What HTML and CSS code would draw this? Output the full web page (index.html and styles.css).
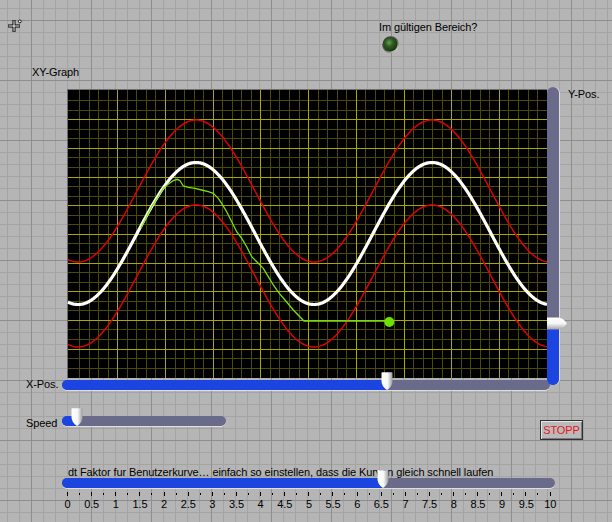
FILE: index.html
```html
<!DOCTYPE html>
<html lang="de">
<head>
<meta charset="utf-8">
<title>XY-Graph</title>
<link rel="stylesheet" href="styles.css">
</head>
<body>
<div class="panel">
  <svg class="cursor" width="16" height="16" viewBox="0 0 16 16">
    <path d="M1 7H13M7 1V13" stroke="#000" stroke-width="3" fill="none"/>
    <path d="M1.5 7H12.5M7 1.5V12.5" stroke="#fff" stroke-width="1" fill="none"/>
    <circle cx="12.8" cy="2.4" r="1.4" fill="#fff" stroke="#000" stroke-width="0.9"/>
  </svg>

  <div class="indicator">
    <div class="label">Im gültigen Bereich?</div>
    <svg class="led" width="18" height="18" viewBox="0 0 18 18">
      <defs>
        <linearGradient id="ledRim" x1="0" y1="0" x2="1" y2="1">
          <stop offset="0" stop-color="#2e2e2e"/>
          <stop offset="0.55" stop-color="#5c5c5c"/>
          <stop offset="1" stop-color="#ffffff"/>
        </linearGradient>
        <radialGradient id="ledFace" cx="0.42" cy="0.38" r="0.62">
          <stop offset="0" stop-color="#6a9a58"/>
          <stop offset="0.45" stop-color="#2f5c20"/>
          <stop offset="1" stop-color="#123808"/>
        </radialGradient>
      </defs>
      <circle cx="8.8" cy="8.8" r="8.5" fill="url(#ledRim)"/>
      <circle cx="8.3" cy="8.3" r="7.1" fill="url(#ledFace)"/>
    </svg>
  </div>

  <div class="graph">
    <div class="label graph-label">XY-Graph</div>
    <div class="plot-row">
      <svg class="plot" width="480" height="289" viewBox="67 89 480 289">
        <rect x="67" y="89" width="480" height="289" fill="#6e6e6e"/>
        <rect x="68" y="90" width="479" height="288" fill="#000"/>
        <g id="grid-minor" class="grid-minor"></g>
        <g id="grid-major" class="grid-major"></g>
        <path id="red-top" class="curve-red" d=""/>
        <path id="red-bottom" class="curve-red" d=""/>
        <path id="white" class="curve-white" d=""/>
        <polyline class="curve-green" points="140.7,228.3 145,220 151.7,206.7 158.3,196.7 163.3,188.3 168.3,184 173.3,180.7 177.3,179.3 180,180.7 183.3,186 188.3,187.3 195,188.3 201.7,190 208.3,191.7 213.3,193.3 218.3,198.3 221.7,203.3 226.7,211.7 231.7,221.7 236.7,231.7 241.7,238.3 246.7,246.7 251.7,256.7 258.3,263.3 263.3,268.3 268.3,276.7 273.3,285 279.3,293.3 285,300 293.3,310 304,321 386,321"/>
        <circle class="dot-green" cx="389.3" cy="322" r="5"/>
      </svg>
      <div class="vslider">
        <div class="vfill" style="height:59px"></div>
        <svg class="vthumb" width="21" height="14" viewBox="0 0 21 14">
          <defs>
            <linearGradient id="vtg" x1="0" y1="0" x2="0" y2="1">
              <stop offset="0" stop-color="#ffffff"/>
              <stop offset="0.5" stop-color="#f6f6f6"/>
              <stop offset="1" stop-color="#a4a4a4"/>
            </linearGradient>
          </defs>
          <path d="M0 0.5H11Q16 0.5 20 6.5Q16 12.5 11 12.5H0Z" fill="url(#vtg)"/>
        </svg>
      </div>
      <div class="label ylabel">Y-Pos.</div>
    </div>
    <div class="xrow">
      <div class="label side-label">X-Pos.</div>
      <div class="hslider xslider">
        <div class="fill" style="width:325px"></div>
        <svg class="hthumb" style="left:319px" width="12" height="18" viewBox="0 0 12 18">
          <defs>
            <linearGradient id="htg1" x1="0" y1="0" x2="1" y2="0">
              <stop offset="0" stop-color="#ffffff"/>
              <stop offset="0.55" stop-color="#f8f8f8"/>
              <stop offset="1" stop-color="#9c9c9c"/>
            </linearGradient>
          </defs>
          <path d="M0.5 1Q0.5 0.3 1.5 0.3H10.5Q11.5 0.3 11.5 1V9Q11.5 14 6.5 17.7H5.5Q0.5 14 0.5 9Z" fill="url(#htg1)"/>
        </svg>
      </div>
    </div>
  </div>

  <div class="speed-row">
    <div class="label side-label speed-label">Speed</div>
    <div class="hslider speed-slider">
      <div class="fill" style="width:15px"></div>
      <svg class="hthumb" style="left:9px" width="12" height="18" viewBox="0 0 12 18">
        <defs>
          <linearGradient id="htg2" x1="0" y1="0" x2="1" y2="0">
            <stop offset="0" stop-color="#ffffff"/>
            <stop offset="0.55" stop-color="#f8f8f8"/>
            <stop offset="1" stop-color="#9c9c9c"/>
          </linearGradient>
        </defs>
        <path d="M0.5 1Q0.5 0.3 1.5 0.3H10.5Q11.5 0.3 11.5 1V9Q11.5 14 6.5 17.7H5.5Q0.5 14 0.5 9Z" fill="url(#htg2)"/>
      </svg>
    </div>
    <div class="stop-button">STOPP</div>
  </div>

  <div class="dt-block">
    <div class="label dt-label">dt Faktor fur Benutzerkurve… einfach so einstellen, dass die Kurven gleich schnell laufen</div>
    <div class="hslider dt-slider">
      <div class="fill" style="width:321px"></div>
      <svg class="hthumb" style="left:315px" width="12" height="18" viewBox="0 0 12 18">
        <defs>
          <linearGradient id="htg3" x1="0" y1="0" x2="1" y2="0">
            <stop offset="0" stop-color="#ffffff"/>
            <stop offset="0.55" stop-color="#f8f8f8"/>
            <stop offset="1" stop-color="#9c9c9c"/>
          </linearGradient>
        </defs>
        <path d="M0.5 1Q0.5 0.3 1.5 0.3H10.5Q11.5 0.3 11.5 1V9Q11.5 14 6.5 17.7H5.5Q0.5 14 0.5 9Z" fill="url(#htg3)"/>
      </svg>
    </div>
    <div class="ticks">
      <span class="tick major"></span><span class="tick"></span><span class="tick major"></span><span class="tick"></span>
      <span class="tick major"></span><span class="tick"></span><span class="tick major"></span><span class="tick"></span>
      <span class="tick major"></span><span class="tick"></span><span class="tick major"></span><span class="tick"></span>
      <span class="tick major"></span><span class="tick"></span><span class="tick major"></span><span class="tick"></span>
      <span class="tick major"></span><span class="tick"></span><span class="tick major"></span><span class="tick"></span>
      <span class="tick major"></span><span class="tick"></span><span class="tick major"></span><span class="tick"></span>
      <span class="tick major"></span><span class="tick"></span><span class="tick major"></span><span class="tick"></span>
      <span class="tick major"></span><span class="tick"></span><span class="tick major"></span><span class="tick"></span>
      <span class="tick major"></span><span class="tick"></span><span class="tick major"></span><span class="tick"></span>
      <span class="tick major"></span><span class="tick"></span><span class="tick major"></span><span class="tick"></span>
      <span class="tick major"></span>
    </div>
    <div class="tick-labels">
      <span class="tl"><span>0</span></span><span class="tl"><span>0.5</span></span><span class="tl"><span>1</span></span>
      <span class="tl"><span>1.5</span></span><span class="tl"><span>2</span></span><span class="tl"><span>2.5</span></span>
      <span class="tl"><span>3</span></span><span class="tl"><span>3.5</span></span><span class="tl"><span>4</span></span>
      <span class="tl"><span>4.5</span></span><span class="tl"><span>5</span></span><span class="tl"><span>5.5</span></span>
      <span class="tl"><span>6</span></span><span class="tl"><span>6.5</span></span><span class="tl"><span>7</span></span>
      <span class="tl"><span>7.5</span></span><span class="tl"><span>8</span></span><span class="tl"><span>8.5</span></span>
      <span class="tl"><span>9</span></span><span class="tl"><span>9.5</span></span><span class="tl"><span>10</span></span>
    </div>
  </div>
</div>
<script src="script.js"></script>
</body>
</html>
```

FILE: styles.css
```css
* {
  box-sizing: border-box;
}

html,
body {
  margin: 0;
  padding: 0;
}

body {
  background: #b5b5b5;
}

.panel {
  position: relative;
  width: 612px;
  height: 522px;
  overflow: hidden;
  font-family: "Liberation Sans", Arial, sans-serif;
  font-size: 11px;
  line-height: 13px;
  letter-spacing: -0.1px;
  color: #000;
  background-color: #b5b5b5;
  background-image:
    linear-gradient(to right, #8e8e8e 1px, transparent 1px),
    linear-gradient(to bottom, #8e8e8e 1px, transparent 1px),
    linear-gradient(to right, #a4a4a4 1px, transparent 1px),
    linear-gradient(to bottom, #a4a4a4 1px, transparent 1px);
  background-size: 60px 60px, 60px 60px, 12px 12px, 12px 12px;
  background-position: 31px 0, 0 20px, 7px 0, 0 8px;
}

.label {
  height: 13px;
  white-space: nowrap;
}

.cursor {
  position: absolute;
  left: 7px;
  top: 19px;
}

/* Indicator */
.indicator {
  padding-top: 21px;
  padding-left: 379px;
}

.led {
  display: block;
  margin-top: 2px;
  margin-left: 3px;
}

/* Graph */
.graph-label {
  margin-top: 12px;
  padding-left: 32px;
}

.plot-row {
  display: flex;
  align-items: flex-start;
  height: 299px;
  padding-left: 67px;
}

.plot {
  display: block;
  flex: none;
  margin-top: 10px;
}

.grid-minor {
  stroke: #4a4a00;
  stroke-width: 1;
  shape-rendering: crispEdges;
}

.grid-major {
  stroke: #a8a800;
  stroke-width: 1;
  shape-rendering: crispEdges;
}

.curve-red {
  fill: none;
  stroke: #e00000;
  stroke-width: 1.5;
}

.curve-white {
  fill: none;
  stroke: #ffffff;
  stroke-width: 3.2;
}

.curve-green {
  fill: none;
  stroke: #78e016;
  stroke-width: 1.3;
}

.dot-green {
  fill: #6ee000;
}

.vslider {
  position: relative;
  z-index: 1;
  flex: none;
  display: flex;
  flex-direction: column;
  justify-content: flex-end;
  width: 12px;
  height: 298px;
  margin-top: 8px;
  background: #6a6a8a;
  border-radius: 6px;
  box-shadow: 1px 0 0 #dedede;
}

.vfill {
  background: #1c44e0;
  border-radius: 0 0 6px 6px;
}

.vthumb {
  position: absolute;
  left: 0;
  top: 230px;
}

.ylabel {
  margin-left: 9px;
  margin-top: 9px;
}

/* Horizontal sliders */
.xrow {
  display: flex;
  align-items: flex-start;
  height: 12px;
  padding-left: 26px;
}

.side-label {
  flex: none;
  width: 36px;
}

.hslider {
  position: relative;
  flex: none;
  height: 10px;
  background: #6a6a8a;
  border-radius: 5px;
  box-shadow: 0 1px 0 #dedede;
}

.fill {
  height: 100%;
  background: #1c44e0;
  border-radius: 5px 0 0 5px;
}

.hthumb {
  position: absolute;
  top: -8px;
}

.xslider {
  width: 488px;
  margin-top: 2px;
}

.speed-row {
  display: flex;
  align-items: flex-start;
  height: 50px;
  padding-left: 26px;
}

.speed-label {
  margin-top: 27px;
}

.speed-slider {
  width: 164px;
  margin-top: 26px;
}

.stop-button {
  flex: none;
  width: 43px;
  height: 20px;
  margin-top: 30px;
  margin-left: 314px;
  border: 1px solid #303030;
  background: #bababa;
  box-shadow: inset 1px 1px 0 #e6e6e6, inset -1px -1px 0 #7a7a7a;
  color: #e8141c;
  line-height: 18px;
  text-align: center;
}

/* dt slider */
.dt-label {
  margin-top: 26px;
  padding-left: 68px;
}

.dt-slider {
  width: 493px;
  margin-top: -1px;
  margin-left: 62px;
}

.ticks {
  display: flex;
  justify-content: space-between;
  align-items: flex-start;
  width: 484px;
  height: 4px;
  margin-top: 4px;
  margin-left: 67px;
}

.tick {
  width: 1px;
  height: 2px;
  margin-top: 1px;
  background: #000;
}

.tick.major {
  height: 4px;
  margin-top: 0;
}

.tick-labels {
  display: flex;
  justify-content: space-between;
  width: 484px;
  margin-top: 2px;
  margin-left: 67px;
}

.tl {
  display: flex;
  justify-content: center;
  width: 1px;
  white-space: nowrap;
}
```

FILE: script.js
```js
(function () {
  var NS = 'http://www.w3.org/2000/svg';
  var minor = document.getElementById('grid-minor');
  var major = document.getElementById('grid-major');

  function line(group, x1, y1, x2, y2) {
    var l = document.createElementNS(NS, 'line');
    l.setAttribute('x1', x1);
    l.setAttribute('y1', y1);
    l.setAttribute('x2', x2);
    l.setAttribute('y2', y2);
    group.appendChild(l);
  }

  var X0 = 69.6, X1 = 546.6, Y0 = 91, Y1 = 377.7;
  var i, x, y;
  for (i = 1; i < 50; i++) {
    x = Math.round(X0 + (X1 - X0) * i / 50) + 0.5;
    line(i % 5 ? minor : major, x, 90, x, 378);
  }
  for (i = 1; i < 30; i++) {
    y = Math.floor(Y0 + (Y1 - Y0) * i / 30) + 0.5;
    line(i % 3 ? minor : major, 68, y, 547, y);
  }

  function wave(id, center) {
    var d = '';
    for (var px = 68; px <= 547; px += 1) {
      var py = center - 71 * Math.cos(2 * Math.PI * (px - 196) / 236);
      d += (px === 68 ? 'M' : 'L') + px + ' ' + py.toFixed(2);
    }
    document.getElementById(id).setAttribute('d', d);
  }

  wave('red-top', 191);
  wave('white', 233.5);
  wave('red-bottom', 276);
})();
```
